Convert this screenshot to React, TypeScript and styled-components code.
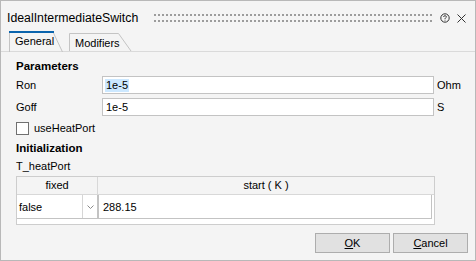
import React from 'react';
import styled, { createGlobalStyle } from 'styled-components';

const GlobalStyle = createGlobalStyle`
  html, body { margin: 0; padding: 0; background: #f4f4f4; }
  body { font-family: "Liberation Sans", Arial, sans-serif; }
  * { box-sizing: border-box; }
`;

const Window = styled.div`
  width: 476px;
  height: 261px;
  border: 1px solid #b8b8b8;
  background: #f4f4f4;
  display: flex;
  flex-direction: column;
  color: #000;
  font-size: 11px;
`;

const TitleBar = styled.div`
  height: 30px;
  display: flex;
  align-items: center;
  padding: 4px 9px 0 6px;
`;

const Title = styled.div`
  font-size: 12.3px;
  white-space: nowrap;
`;

const Grip = styled.div`
  flex: 1;
  height: 8px;
  margin: 0 8px 0 16px;
  background-image: linear-gradient(90deg, #9c9c9c 2px, transparent 2px),
    linear-gradient(90deg, #9c9c9c 2px, transparent 2px);
  background-size: 4px 2px, 4px 2px;
  background-position: 0 0, 0 6px;
  background-repeat: repeat-x;
`;

const TitleIcons = styled.div`
  display: flex;
  align-items: center;
  gap: 7px;
`;

const TabBar = styled.div`
  height: 21px;
  display: flex;
  align-items: flex-end;
  padding-left: 8px;
  border-bottom: 1px solid #dadada;
`;

const TabShape = styled.svg`
  position: absolute;
  left: 0;
  top: 0;
  overflow: visible;
`;

const Tab = styled.div<{ $active?: boolean; $w: number }>`
  position: relative;
  width: ${(p) => p.$w}px;
  height: ${(p) => (p.$active ? 21 : 18)}px;
  margin-bottom: ${(p) => (p.$active ? -1 : 0)}px;
  margin-right: 6px;
  background: transparent;
  padding: ${(p) => (p.$active ? 4 : 4)}px 0 0 6px;
  line-height: 13px;
  font-size: 11px;
  z-index: ${(p) => (p.$active ? 1 : 0)};
  & > span { position: relative; }
`;

const Pane = styled.div`
  flex: 1;
  display: flex;
  flex-direction: column;
  padding: 7px 0 0 15px;
`;

const Heading = styled.div<{ $mt?: number }>`
  font-weight: bold;
  font-size: 11.5px;
  line-height: 14px;
  margin-top: ${(p) => p.$mt ?? 0}px;
`;

const FormGrid = styled.div`
  display: grid;
  grid-template-columns: 86px 332px auto;
  row-gap: 4px;
  align-items: center;
  margin-top: 3px;
`;

const Label = styled.div`
  line-height: 14px;
`;

const Input = styled.div`
  height: 18px;
  border: 1px solid #c3c3c3;
  background: #fff;
  padding-left: 2px;
  display: flex;
  align-items: center;
  line-height: 13px;
`;

const Selected = styled.span`
  background: #cce8ff;
  padding: 0 1px;
`;

const Unit = styled.div`
  padding-left: 3px;
  line-height: 14px;
`;

const CheckRow = styled.div`
  display: flex;
  align-items: center;
  gap: 5px;
  margin-top: 5px;
  height: 14px;
`;

const CheckBox = styled.div`
  width: 13px;
  height: 13px;
  border: 1px solid #707070;
  background: #fff;
`;

const SubLabel = styled.div`
  line-height: 14px;
  margin-top: 4px;
`;

const Table = styled.div`
  width: 419px;
  height: 49px;
  margin-top: 3px;
  border: 1px solid #cdcdcd;
  background: #fff;
  display: grid;
  grid-template-columns: 81px 1fr;
  grid-template-rows: 18px 24px;
`;

const HeaderCell = styled.div<{ $last?: boolean }>`
  background: #f4f4f4;
  border-bottom: 1px solid #d8d8d8;
  border-right: ${(p) => (p.$last ? 'none' : '1px solid #d8d8d8')};
  text-align: center;
  line-height: 16px;
`;

const Combo = styled.div`
  display: flex;
  border: 1px solid #c3c3c3;
  border-left: none;
  border-top: none;
  background: #fff;
  height: 24px;
`;

const ComboText = styled.div`
  flex: 1;
  padding-left: 2px;
  display: flex;
  align-items: center;
`;

const ComboArrow = styled.div`
  width: 15px;
  border-left: 1px solid #d6d6d6;
  display: flex;
  align-items: center;
  justify-content: center;
`;

const CellEdit = styled.div`
  height: 24px;
  margin-right: 2px;
  border: 1px solid #c3c3c3;
  border-top: none;
  display: flex;
  align-items: center;
  padding-left: 4px;
`;

const Footer = styled.div`
  display: flex;
  justify-content: flex-end;
  gap: 3px;
  padding: 0 7px 7px 0;
`;

const Button = styled.button`
  width: 75px;
  height: 20px;
  border: 1px solid #adadad;
  background: #e1e1e1;
  font-family: "Liberation Sans", Arial, sans-serif;
  font-size: 11px;
  color: #000;
  padding: 0;
  line-height: 16px;
  & u { text-decoration-thickness: 1px; text-underline-offset: 1px; }
`;

const HelpIcon = () => (
  <svg width="10" height="10" viewBox="0 0 10 10">
    <circle cx="5" cy="5" r="4.2" fill="none" stroke="#333" strokeWidth="1" />
    <path d="M3.6 4 Q3.6 2.7 5 2.7 Q6.4 2.7 6.4 3.9 Q6.4 4.6 5.5 5 Q5 5.3 5 6" fill="none" stroke="#333" strokeWidth="0.9" />
    <rect x="4.55" y="6.7" width="0.9" height="0.9" fill="#333" />
  </svg>
);

const CloseIcon = () => (
  <svg width="9" height="9" viewBox="0 0 9 9">
    <path d="M0.5 0.5 L8.5 8.5 M8.5 0.5 L0.5 8.5" stroke="#333" strokeWidth="1" />
  </svg>
);

const Chevron = () => (
  <svg width="7" height="4" viewBox="0 0 7 4">
    <path d="M0.5 0.5 L3.5 3.5 L6.5 0.5" fill="none" stroke="#8a8a8a" strokeWidth="1" />
  </svg>
);

export default function App() {
  return (
    <>
      <GlobalStyle />
      <Window>
        <TitleBar>
          <Title>IdealIntermediateSwitch</Title>
          <Grip />
          <TitleIcons>
            <HelpIcon />
            <CloseIcon />
          </TitleIcons>
        </TitleBar>
        <TabBar>
          <Tab $active $w={54}>
            <TabShape width="54" height="21">
              <rect x="0" y="0" width="45" height="2" fill="#0a64ad" />
              <path d="M0.5 2 V21 M44.5 2 L53.5 21" stroke="#c4c4c4" strokeWidth="1" fill="none" />
            </TabShape>
            <span>General</span>
          </Tab>
          <Tab $w={63}>
            <TabShape width="63" height="18">
              <path d="M0.5 18 V0.5 H49.5 L62 18" stroke="#c4c4c4" strokeWidth="1" fill="none" />
            </TabShape>
            <span>Modifiers</span>
          </Tab>
        </TabBar>
        <Pane>
          <Heading>Parameters</Heading>
          <FormGrid>
            <Label>Ron</Label>
            <Input>
              <Selected>1e-5</Selected>
            </Input>
            <Unit>Ohm</Unit>
            <Label>Goff</Label>
            <Input>
              <span style={{ paddingLeft: 1 }}>1e-5</span>
            </Input>
            <Unit>S</Unit>
          </FormGrid>
          <CheckRow>
            <CheckBox />
            <span>useHeatPort</span>
          </CheckRow>
          <Heading $mt={6}>Initialization</Heading>
          <SubLabel>T_heatPort</SubLabel>
          <Table>
            <HeaderCell>fixed</HeaderCell>
            <HeaderCell $last>start ( K )</HeaderCell>
            <Combo>
              <ComboText>false</ComboText>
              <ComboArrow>
                <Chevron />
              </ComboArrow>
            </Combo>
            <CellEdit>288.15</CellEdit>
          </Table>
        </Pane>
        <Footer>
          <Button>
            <u>O</u>K
          </Button>
          <Button>
            <u>C</u>ancel
          </Button>
        </Footer>
      </Window>
    </>
  );
}
